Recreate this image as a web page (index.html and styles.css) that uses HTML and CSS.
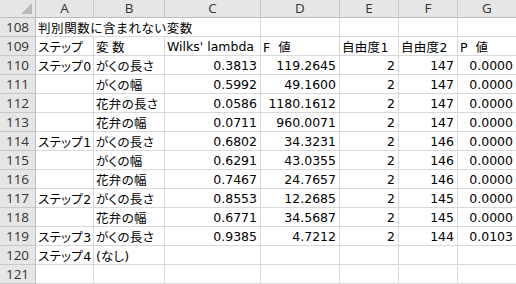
FILE: index.html
```html
<!DOCTYPE html>
<html lang="ja">
<head>
<meta charset="utf-8">
<title>Sheet</title>
<link rel="stylesheet" href="styles.css">
</head>
<body>
<div class="sheet">
  <div class="corner"><svg width="35" height="17" viewBox="0 0 35 17"><polygon points="32,3 32,14 21,14" fill="#b9b9b9"/></svg></div>
  <div class="ch">A</div><div class="ch">B</div><div class="ch">C</div><div class="ch">D</div><div class="ch">E</div><div class="ch">F</div><div class="ch last">G</div>

  <div class="rh">108</div><div class="c span3"><span class="jp title">判別関数に含まれない変数</span></div><div class="c"></div><div class="c"></div><div class="c"></div><div class="c last"></div>

  <div class="rh">109</div><div class="c"><span class="jp">ステップ</span></div><div class="c"><span class="jp">変 数</span></div><div class="c">Wilks' lambda</div><div class="c">F&nbsp;&nbsp;<span class="jp">値</span></div><div class="c"><span class="jp">自由度</span>1</div><div class="c"><span class="jp">自由度</span>2</div><div class="c last">P&nbsp;&nbsp;<span class="jp">値</span></div>

  <div class="rh">110</div><div class="c"><span class="jp">ステップ</span>0</div><div class="c"><span class="jp">がくの長さ</span></div><div class="c n">0.3813</div><div class="c n">119.2645</div><div class="c n">2</div><div class="c n">147</div><div class="c n last">0.0000</div>
  <div class="rh">111</div><div class="c"></div><div class="c"><span class="jp">がくの幅</span></div><div class="c n">0.5992</div><div class="c n">49.1600</div><div class="c n">2</div><div class="c n">147</div><div class="c n last">0.0000</div>
  <div class="rh">112</div><div class="c"></div><div class="c"><span class="jp">花弁の長さ</span></div><div class="c n">0.0586</div><div class="c n">1180.1612</div><div class="c n">2</div><div class="c n">147</div><div class="c n last">0.0000</div>
  <div class="rh">113</div><div class="c"></div><div class="c"><span class="jp">花弁の幅</span></div><div class="c n">0.0711</div><div class="c n">960.0071</div><div class="c n">2</div><div class="c n">147</div><div class="c n last">0.0000</div>
  <div class="rh">114</div><div class="c"><span class="jp">ステップ</span>1</div><div class="c"><span class="jp">がくの長さ</span></div><div class="c n">0.6802</div><div class="c n">34.3231</div><div class="c n">2</div><div class="c n">146</div><div class="c n last">0.0000</div>
  <div class="rh">115</div><div class="c"></div><div class="c"><span class="jp">がくの幅</span></div><div class="c n">0.6291</div><div class="c n">43.0355</div><div class="c n">2</div><div class="c n">146</div><div class="c n last">0.0000</div>
  <div class="rh">116</div><div class="c"></div><div class="c"><span class="jp">花弁の幅</span></div><div class="c n">0.7467</div><div class="c n">24.7657</div><div class="c n">2</div><div class="c n">146</div><div class="c n last">0.0000</div>
  <div class="rh">117</div><div class="c"><span class="jp">ステップ</span>2</div><div class="c"><span class="jp">がくの長さ</span></div><div class="c n">0.8553</div><div class="c n">12.2685</div><div class="c n">2</div><div class="c n">145</div><div class="c n last">0.0000</div>
  <div class="rh">118</div><div class="c"></div><div class="c"><span class="jp">花弁の幅</span></div><div class="c n">0.6771</div><div class="c n">34.5687</div><div class="c n">2</div><div class="c n">145</div><div class="c n last">0.0000</div>
  <div class="rh">119</div><div class="c"><span class="jp">ステップ</span>3</div><div class="c"><span class="jp">がくの長さ</span></div><div class="c n">0.9385</div><div class="c n">4.7212</div><div class="c n">2</div><div class="c n">144</div><div class="c n last">0.0103</div>
  <div class="rh">120</div><div class="c"><span class="jp">ステップ</span>4</div><div class="c">(<span class="jp">なし</span>)</div><div class="c"></div><div class="c"></div><div class="c"></div><div class="c"></div><div class="c last"></div>
  <div class="rh">121</div><div class="c"></div><div class="c"></div><div class="c"></div><div class="c"></div><div class="c"></div><div class="c"></div><div class="c last"></div>
</div>
</body>
</html>
```

FILE: styles.css
```css
html, body {
  margin: 0;
  padding: 0;
  background: #ffffff;
  overflow: hidden;
}

.sheet {
  display: grid;
  grid-template-columns: 36px 58px 71px 96px 79px 59px 59px 59px;
  grid-template-rows: 18px repeat(14, 19px);
  width: 517px;
  font-family: "DejaVu Sans", "Noto Sans CJK JP", sans-serif;
  font-size: 12.5px;
  color: #000;
}

.sheet > div {
  box-sizing: border-box;
  border-right: 1px solid #d9d9d9;
  border-bottom: 1px solid #d9d9d9;
  display: block;
  line-height: 18px;
  white-space: nowrap;
  overflow: hidden;
}

.jp {
  font-family: "Noto Sans CJK JP", sans-serif;
  font-feature-settings: "palt";
  letter-spacing: 0.3px;
}

.jp.title {
  letter-spacing: 0.6px;
}

.sheet > .corner {
  background: #e6e6e6;
  border-right: 1px solid #bdbdbd;
  border-bottom: 1px solid #bdbdbd;
  padding: 0;
  overflow: hidden;
}

.corner svg {
  display: block;
}

.sheet > .ch {
  background: #e6e6e6;
  border-right: 1px solid #c8c8c8;
  border-bottom: 1px solid #bdbdbd;
  text-align: center;
  line-height: 17px;
  font-family: "Open Sans", "Noto Sans", sans-serif;
  font-size: 13.5px;
  color: #333;
}

.sheet > .rh {
  background: #e6e6e6;
  border-right: 1px solid #bdbdbd;
  border-bottom: 1px solid #c8c8c8;
  text-align: center;
  font-family: "Open Sans", "Noto Sans", sans-serif;
  font-size: 13.5px;
  color: #333;
}

.c {
  padding: 1px 3px 0 2px;
}

.n {
  text-align: right;
}

.span3 {
  grid-column: span 3;
  overflow: visible;
}
```
